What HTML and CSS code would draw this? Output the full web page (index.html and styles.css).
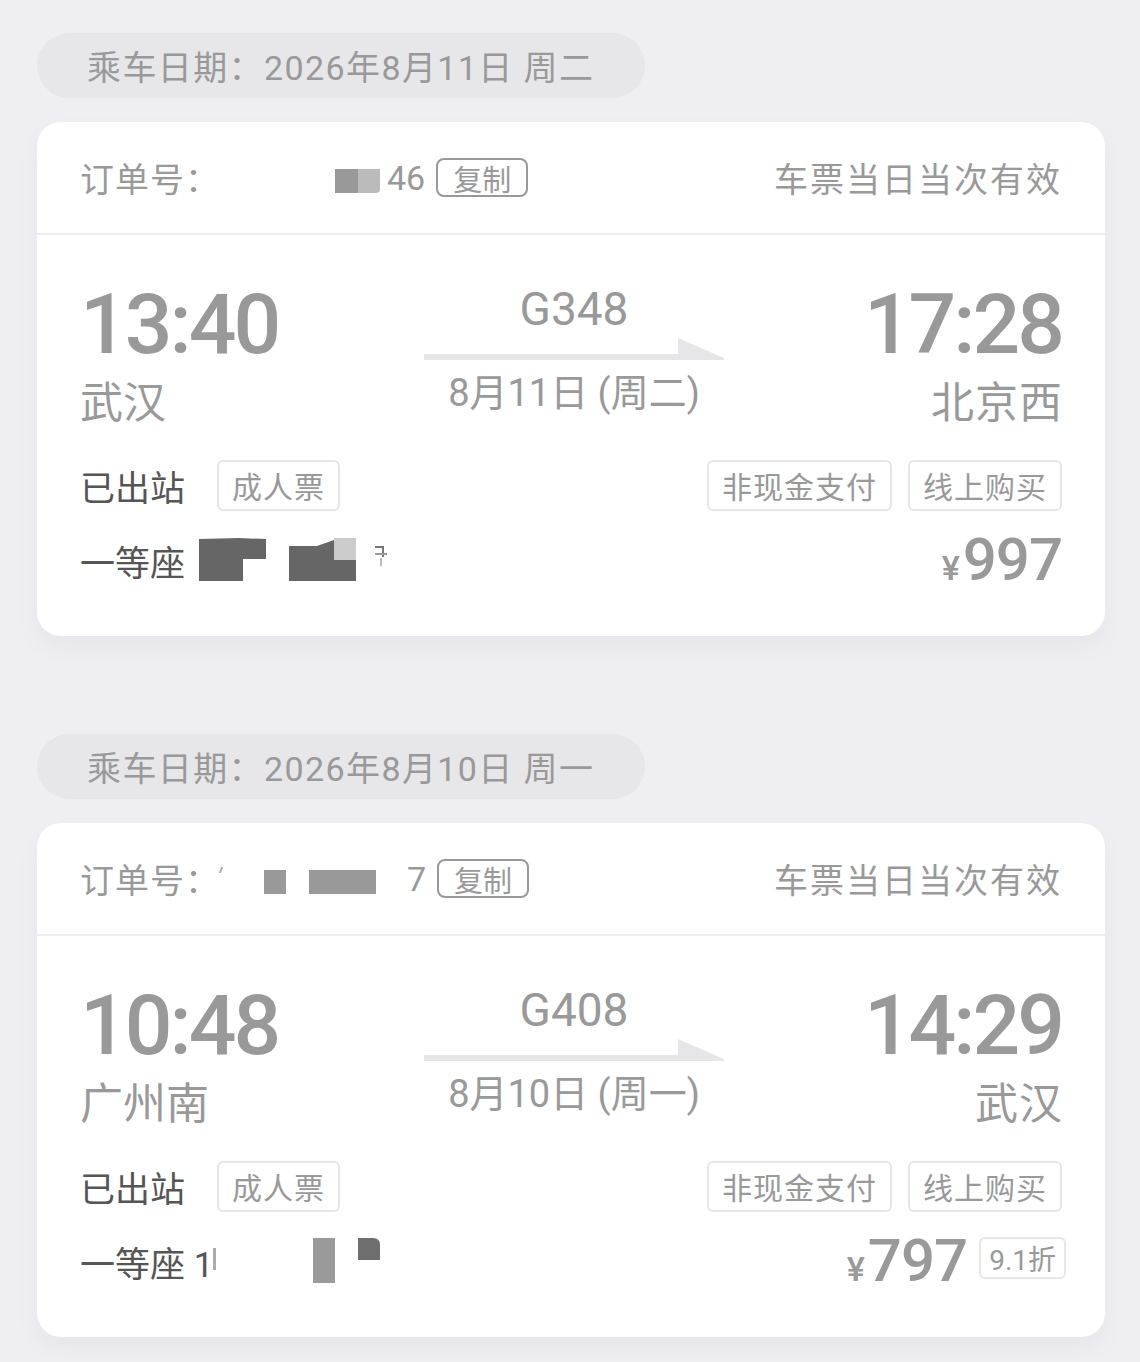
FILE: index.html
```html
<!DOCTYPE html>
<html lang="zh-CN">
<head>
    <meta charset="UTF-8">
    <meta name="viewport" content="width=device-width, initial-scale=1.0">
    <title>车票</title>
    <link rel="stylesheet" href="styles.css">
</head>
<body>
    <div class="list">
        <!-- Ticket 1 -->
        <div class="date-pill">乘车日期：2026年8月11日 周二</div>
        <div class="ticket">
            <div class="ticket-head">
                <div class="order">
                    <span class="order-label">订单号：</span>
                    <span class="blank" style="width:115px"></span>
                    <span class="mask mid" style="width:23px"></span><span class="mask light" style="width:22px"></span>
                    <span class="order-tail">46</span>
                    <span class="copy">复制</span>
                </div>
                <div class="valid">车票当日当次有效</div>
            </div>
            <div class="route">
                <div class="end">
                    <div class="time">13:40</div>
                    <div class="station">武汉</div>
                </div>
                <div class="middle">
                    <div class="train">G348</div>
                    <svg class="arrow" width="301" height="26" viewBox="0 0 301 26">
                        <polygon points="0,19 254,19 254,3 300,23 300,25 0,25" fill="#e6e6e8"/>
                    </svg>
                    <div class="run-date">8月11日 (周二)</div>
                </div>
                <div class="end right">
                    <div class="time">17:28</div>
                    <div class="station">北京西</div>
                </div>
            </div>
            <div class="row">
                <div class="left">
                    <span class="status">已出站</span>
                    <span class="tag">成人票</span>
                </div>
                <div class="right-tags">
                    <span class="tag">非现金支付</span>
                    <span class="tag">线上购买</span>
                </div>
            </div>
            <div class="row seat-row">
                <div class="left">
                    <span class="status">一等座</span>
                    <svg class="seat-mask" width="192" height="44" viewBox="0 0 192 44">
                        <path d="M0,1 L40,0 L67,1 V21 H44 V43 H0 Z" fill="#666"/>
                        <path d="M90,8 H118 L135,2 V43 H90 Z" fill="#666"/>
                        <rect x="135" y="0" width="22" height="22" fill="#cccccc"/>
                        <rect x="135" y="22" width="22" height="21" fill="#666"/>
                        <rect x="176" y="8" width="9" height="2" fill="#777"/>
                        <rect x="183" y="9" width="2" height="10" fill="#777"/>
                        <rect x="176" y="15" width="12" height="2" fill="#999"/>
                        <rect x="181" y="20" width="2" height="8" fill="#bbb"/>
                    </svg>
                </div>
                <div class="price"><span class="yen">¥</span>997</div>
            </div>
        </div>

        <!-- Ticket 2 -->
        <div class="date-pill">乘车日期：2026年8月10日 周一</div>
        <div class="ticket">
            <div class="ticket-head">
                <div class="order">
                    <span class="order-label">订单号：</span>
                    <span class="tick"></span>
                    <span class="blank" style="width:42px"></span>
                    <span class="mask mid" style="width:22px"></span>
                    <span class="blank" style="width:23px"></span>
                    <span class="mask mid" style="width:67px"></span>
                    <span class="blank" style="width:24px"></span>
                    <span class="order-tail">7</span>
                    <span class="copy">复制</span>
                </div>
                <div class="valid">车票当日当次有效</div>
            </div>
            <div class="route">
                <div class="end">
                    <div class="time">10:48</div>
                    <div class="station">广州南</div>
                </div>
                <div class="middle">
                    <div class="train">G408</div>
                    <svg class="arrow" width="301" height="26" viewBox="0 0 301 26">
                        <polygon points="0,19 254,19 254,3 300,23 300,25 0,25" fill="#e6e6e8"/>
                    </svg>
                    <div class="run-date">8月10日 (周一)</div>
                </div>
                <div class="end right">
                    <div class="time">14:29</div>
                    <div class="station">武汉</div>
                </div>
            </div>
            <div class="row">
                <div class="left">
                    <span class="status">已出站</span>
                    <span class="tag">成人票</span>
                </div>
                <div class="right-tags">
                    <span class="tag">非现金支付</span>
                    <span class="tag">线上购买</span>
                </div>
            </div>
            <div class="row seat-row">
                <div class="left">
                    <span class="status">一等座 1</span>
                    <svg class="seat-mask tight" width="172" height="46" viewBox="0 0 172 46">
                        <rect x="0" y="10" width="3" height="22" fill="#aaa"/>
                        <rect x="100" y="0" width="22" height="45" fill="#9a9a9a"/>
                        <path d="M145,0 H160 Q167,0 167,7 V22 H145 Z" fill="#6e6e6e"/>
                    </svg>
                </div>
                <div class="price-wrap">
                    <div class="price"><span class="yen">¥</span>797</div>
                    <span class="discount">9.1折</span>
                </div>
            </div>
        </div>
    </div>
</body>
</html>
```

FILE: styles.css
```css
/* Page */
body {
    margin: 0;
    padding: 0;
    background: #efeff3;
    font-family: Roboto, "Noto Sans CJK SC", sans-serif;
    color: #999999;
}

.list {
    padding: 33px 35px 24px 37px;
    display: flex;
    flex-direction: column;
    align-items: flex-start;
}

/* Date pill */
.date-pill {
    width: 608px;
    height: 65px;
    box-sizing: border-box;
    padding-left: 50px;
    display: flex;
    align-items: center;
    background: #e7e7ea;
    border-radius: 33px;
    font-size: 34px;
    letter-spacing: 1.4px;
    color: #999;
    margin-bottom: 24px;
}

.ticket + .date-pill {
    margin-top: 98px;
}

/* Ticket card */
.ticket {
    width: 1068px;
    height: 514px;
    box-sizing: border-box;
    background: #ffffff;
    border-radius: 24px;
    box-shadow: 0 12px 26px rgba(0, 0, 0, 0.04);
}

.ticket-head {
    height: 113px;
    box-sizing: border-box;
    padding: 0 45px 0 43px;
    display: flex;
    align-items: center;
    justify-content: space-between;
    border-bottom: 2px solid #eeeeee;
    font-size: 34px;
}

.order {
    display: flex;
    align-items: center;
}

.order-label {
    width: 140px;
    letter-spacing: 1px;
}

.tick {
    display: inline-block;
    width: 2px;
    height: 6px;
    margin-top: -18px;
    background: #aaa;
    transform: skewX(-20deg);
}

.blank {
    display: inline-block;
    height: 20px;
}

.mask {
    display: inline-block;
    height: 24px;
    margin-top: 6px;
}

.mask.mid { background: #999999; }
.mask.light { background: #bbbbbb; border-radius: 0 0 4px 0; }

.order-tail {
    margin-left: 7px;
    margin-right: 11px;
}

.copy {
    display: inline-flex;
    align-items: center;
    height: 39px;
    box-sizing: border-box;
    padding: 0 15px;
    border: 2px solid #999;
    border-radius: 8px;
    font-size: 29px;
    color: #999;
}

.valid {
    letter-spacing: 2px;
    margin-right: -2px;
}

/* Route */
.route {
    display: grid;
    grid-template-columns: 344px 300px 1fr;
    padding: 44px 43px 0 43px;
    height: 174px;
}

.time {
    font-size: 84px;
    font-weight: 500;
    letter-spacing: -3px;
    line-height: 92px;
    color: #999;
}

.station {
    font-size: 43px;
    line-height: 64px;
    color: #999;
}

.end.right {
    text-align: right;
}

.end.right .station {
    letter-spacing: 1px;
    margin-right: -1px;
}

.middle {
    display: flex;
    flex-direction: column;
    align-items: center;
    padding-top: 4px;
}

.train {
    font-size: 46px;
    line-height: 52px;
}

.arrow {
    display: block;
}

.run-date {
    font-size: 38px;
    line-height: 60px;
    margin-top: 2px;
}

/* Bottom rows */
.row {
    display: flex;
    align-items: center;
    justify-content: space-between;
    padding: 0 43px;
    height: 64px;
}

.left {
    display: flex;
    align-items: center;
}

.status {
    font-size: 35px;
    color: #555555;
}

.tag {
    display: inline-flex;
    align-items: center;
    height: 51px;
    box-sizing: border-box;
    padding: 0 13px;
    border: 2px solid #e6e6e6;
    border-radius: 6px;
    font-size: 30px;
    color: #999;
    letter-spacing: 1px;
}

.left .tag {
    margin-left: 32px;
}

.right-tags {
    display: flex;
    gap: 16px;
}

.seat-row {
    height: 86px;
}

.seat-mask {
    display: block;
    margin-left: 14px;
}

.seat-mask.tight {
    margin-left: 0;
}

.price {
    font-size: 60px;
    font-weight: 500;
    letter-spacing: -1px;
    color: #999;
    line-height: 1;
}

.yen {
    font-size: 34px;
    margin-right: 4px;
}

.price-wrap {
    display: flex;
    align-items: center;
    margin-right: -4px;
}

.discount {
    display: inline-flex;
    align-items: center;
    height: 42px;
    box-sizing: border-box;
    padding: 0 8px;
    margin-left: 12px;
    margin-top: -6px;
    border: 2px solid #e6e6e6;
    border-radius: 6px;
    font-size: 28px;
    color: #999;
}
```
